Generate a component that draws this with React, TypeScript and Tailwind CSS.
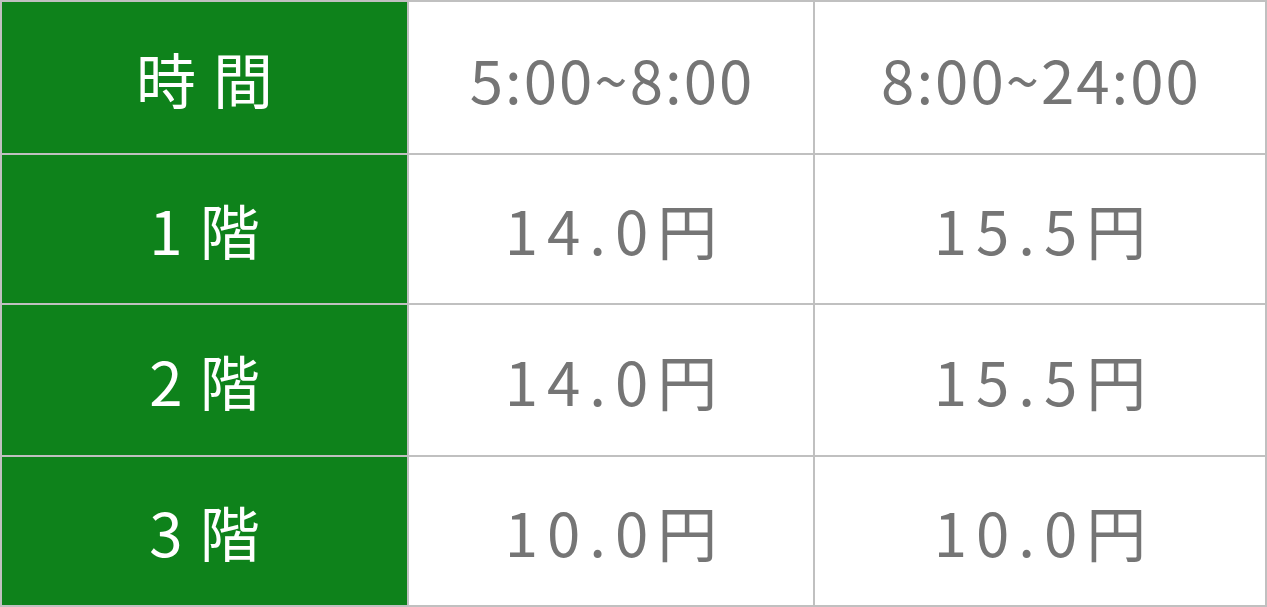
import React from "react";

const font = { fontFamily: '"Noto Sans CJK JP", "Noto Sans", sans-serif' };

function HeadCell({ children }: { children: React.ReactNode }) {
  return (
    <div className="bg-[#0e821b] flex items-center justify-center">
      <span className="text-white text-[60px] leading-none tracking-[17px] pl-[17px]">{children}</span>
    </div>
  );
}

function TimeCell({ children }: { children: React.ReactNode }) {
  return (
    <div className="bg-white flex items-center justify-center">
      <span className="text-[#757575] text-[60px] leading-none tracking-[2px] pl-[2px]">{children}</span>
    </div>
  );
}

function ValCell({ children }: { children: React.ReactNode }) {
  return (
    <div className="bg-white flex items-center justify-center">
      <span className="text-[#757575] text-[60px] leading-none tracking-[9px] pl-[9px]">{children}</span>
    </div>
  );
}

export default function App() {
  return (
    <div style={font} className="w-[1267px] h-[607px] bg-[#c0c0c0] p-[2px] grid grid-cols-[405px_404px_450px] grid-rows-[151px_148px_150px_148px] gap-[2px]">
      <HeadCell>時間</HeadCell>
      <TimeCell>5:00~8:00</TimeCell>
      <TimeCell>8:00~24:00</TimeCell>
      <HeadCell>1階</HeadCell>
      <ValCell>14.0円</ValCell>
      <ValCell>15.5円</ValCell>
      <HeadCell>2階</HeadCell>
      <ValCell>14.0円</ValCell>
      <ValCell>15.5円</ValCell>
      <HeadCell>3階</HeadCell>
      <ValCell>10.0円</ValCell>
      <ValCell>10.0円</ValCell>
    </div>
  );
}
